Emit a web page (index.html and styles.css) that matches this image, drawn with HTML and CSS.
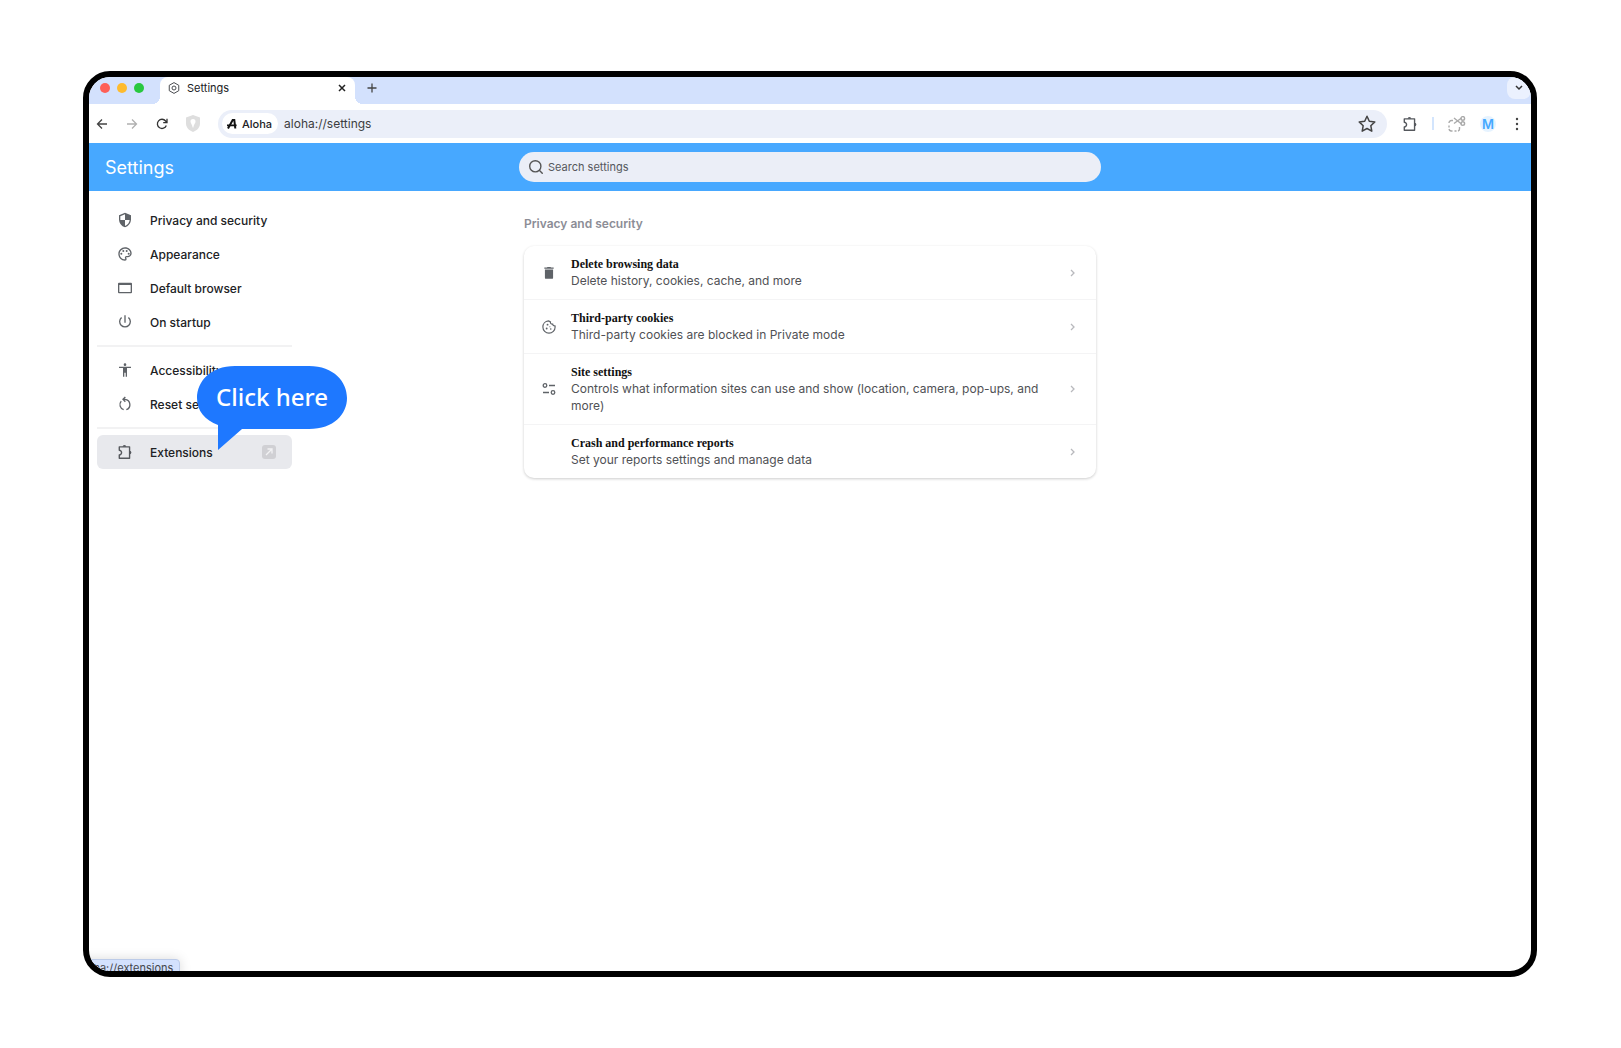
FILE: index.html
```
<!DOCTYPE html>
<html lang="en">
<head>
    <meta charset="UTF-8">
    <meta name="viewport" content="width=device-width, initial-scale=1.0">
    <title>Settings</title>
    <link rel="stylesheet" href="styles.css">
</head>
<body>
    <div class="browser">
        <div class="tab-bar">
            <div class="window-controls">
                <button class="dot dot-red" aria-label="Close window"></button>
                <button class="dot dot-yellow" aria-label="Minimize window"></button>
                <button class="dot dot-green" aria-label="Zoom window"></button>
            </div>
            <div class="tab">
                <svg class="tab-icon" width="12" height="12" viewBox="0 0 24 24" fill="none" stroke="#4a4c50" stroke-width="2"><path d="M12 1.200l9.500 5.400v10.800L12 22.800l-9.500-5.400V6.600z" stroke-linejoin="round"/><circle cx="12" cy="12" r="4"/></svg>
                <span class="tab-title">Settings</span>
                <button class="icon-button tab-close" aria-label="Close tab">
                    <svg width="8" height="8" viewBox="0 0 8 8" stroke="#222" stroke-width="1.5"><path d="M1 1l6 6M7 1L1 7"/></svg>
                </button>
            </div>
            <button class="icon-button new-tab" aria-label="New tab">
                <svg width="10" height="10" viewBox="0 0 10 10" stroke="#444" stroke-width="1.3"><path d="M5 .5v9M.5 5h9"/></svg>
            </button>
            <button class="icon-button tab-search" aria-label="Search tabs">
                <svg width="8" height="6" viewBox="0 0 8 6" fill="none" stroke="#333" stroke-width="1.5"><path d="M1 1l3 3 3-3"/></svg>
            </button>
        </div>

        <div class="toolbar">
            <div class="nav-buttons">
                <button class="icon-button" aria-label="Back">
                    <svg width="12" height="12" viewBox="0 0 12 12" fill="none" stroke="#444" stroke-width="1.3"><path d="M11 6H1.500M6 1.500L1.500 6 6 10.500"/></svg>
                </button>
                <button class="icon-button" aria-label="Forward" disabled>
                    <svg width="12" height="12" viewBox="0 0 12 12" fill="none" stroke="#b0b0b0" stroke-width="1.3"><path d="M1 6h9.500M6 1.500L10.500 6 6 10.500"/></svg>
                </button>
                <button class="icon-button" aria-label="Reload">
                    <svg width="12" height="12" viewBox="0 0 12 12" fill="none" stroke="#333" stroke-width="1.300"><path d="M10.300 7.500A4.600 4.600 0 1 1 9.600 3L11 4.500M11 .8v3.900H7.200"/></svg>
                </button>
                <button class="icon-button" aria-label="Shields">
                    <svg width="14" height="17" viewBox="0 0 14 17"><path d="M7 0l7 2.500v6c0 4-3 7-7 8.500-4-1.500-7-4.500-7-8.500v-6z" fill="#dedede"/><path d="M7 4a2.500 2.500 0 0 1 2.500 2.600C9.500 8.500 8 9 7.400 12.500h-.8C6.500 10 4.500 8.500 4.500 6.600A2.500 2.500 0 0 1 7 4z" fill="#fff"/></svg>
                </button>
            </div>
            <div class="address-bar">
                <span class="site-chip">
                    <svg width="10" height="10" viewBox="0 0 10 10" fill="none" stroke="#111" stroke-width="2"><path d="M1 9.500L5.700 1H7.300L8.300 9.500"/><path d="M0 6.400h9.600" stroke-width="1.600"/></svg>
                    Aloha
                </span>
                <input class="address-input" type="text" value="aloha://settings" aria-label="Address">
                <button class="icon-button" aria-label="Bookmark this page">
                    <svg width="18" height="18" viewBox="0 0 18 18" fill="none" stroke="#444" stroke-width="1.500" stroke-linejoin="round"><path d="M9 1.300l2.300 4.900 5.500.7-4 3.800 1 5.500L9 13.500l-4.800 2.700 1-5.500-4-3.800 5.500-.7z"/></svg>
                </button>
            </div>
            <div class="toolbar-actions">
                <button class="icon-button" aria-label="Extensions">
                    <svg width="16" height="16" viewBox="0 0 14 14"><use href="#puzzle"/></svg>
                </button>
                <span class="toolbar-divider"></span>
                <button class="icon-button" aria-label="Screenshot">
                    <svg width="18" height="16" viewBox="0 0 18 16" fill="none" stroke="#aaa" stroke-width="1.400"><path d="M5 4.500H3.500A2.500 2.500 0 0 0 1 7M1 9.500v2M1 13a2.500 2.500 0 0 0 2 2h1.500M6.500 15h2M10 15a2 2 0 0 0 1.500-2v-2M6 2l7.500 6M6 7.500L13.500 2"/><circle cx="14.800" cy="2.400" r="1.800"/><circle cx="14.800" cy="7.600" r="1.800"/></svg>
                </button>
                <button class="profile-button">M</button>
                <button class="icon-button menu-button" aria-label="Menu">
                    <svg width="4" height="14" viewBox="0 0 4 14" fill="#444"><circle cx="2" cy="2" r="1.200"/><circle cx="2" cy="7" r="1.200"/><circle cx="2" cy="12" r="1.200"/></svg>
                </button>
            </div>
        </div>

        <header class="header">
            <h1 class="header-title">Settings</h1>
            <label class="search">
                <svg width="14" height="14" viewBox="0 0 14 14" fill="none" stroke="#555" stroke-width="1.400"><circle cx="6.300" cy="6.300" r="5.600"/><path d="M10.300 10.300l3.400 3.400"/></svg>
                <input class="search-input" type="text" placeholder="Search settings" aria-label="Search settings">
            </label>
        </header>

        <div class="content">
            <nav class="sidebar">
                <a class="menu-item" href="#privacy">
                    <svg class="menu-icon" viewBox="0 0 24 24" fill="#5f6368"><path d="M12 1L3 5v6c0 5.550 3.840 10.740 9 12 5.160-1.260 9-6.450 9-12V5l-9-4zm0 10.990h7c-.53 4.120-3.280 7.790-7 8.940V12H5V6.300l7-3.110v8.800z"/></svg>
                    Privacy and security
                </a>
                <a class="menu-item" href="#appearance">
                    <svg class="menu-icon" viewBox="0 0 24 24" fill="#5f6368"><path d="M12 22C6.490 22 2 17.510 2 12S6.490 2 12 2s10 4.040 10 9c0 3.310-2.690 6-6 6h-1.770c-.28 0-.5.220-.5.500 0 .120.050.230.130.330.410.470.640 1.060.640 1.670A2.500 2.500 0 0 1 12 22zm0-18c-4.410 0-8 3.590-8 8s3.590 8 8 8c.28 0 .5-.22.5-.5a.540.540 0 0 0-.14-.35c-.41-.46-.63-1.050-.63-1.650a2.500 2.500 0 0 1 2.500-2.500H16c2.210 0 4-1.790 4-4 0-3.860-3.590-7-8-7z"/><circle cx="6.500" cy="11.500" r="1.500"/><circle cx="9.500" cy="7.500" r="1.500"/><circle cx="14.500" cy="7.500" r="1.500"/><circle cx="17.500" cy="11.500" r="1.500"/></svg>
                    Appearance
                </a>
                <a class="menu-item" href="#default-browser">
                    <svg class="menu-icon" viewBox="0 0 24 24" fill="#5f6368"><path d="M21 4H3a1.500 1.500 0 0 0-1.500 1.500v13A1.500 1.500 0 0 0 3 20h18a1.500 1.500 0 0 0 1.500-1.500v-13A1.500 1.500 0 0 0 21 4zm-.5 14h-17V7.500h17z"/></svg>
                    Default browser
                </a>
                <a class="menu-item" href="#startup">
                    <svg class="menu-icon" viewBox="0 0 24 24" fill="#5f6368"><path d="M13 2h-2v11h2V2zm4.830 2.500l-1.420 1.420A7 7 0 1 1 7.580 5.920L6.170 4.500A9 9 0 1 0 17.830 4.500z"/></svg>
                    On startup
                </a>
                <hr class="menu-divider">
                <a class="menu-item" href="#accessibility">
                    <svg class="menu-icon" viewBox="0 0 24 24" fill="#5f6368"><path d="M12 2a2 2 0 1 1 0 4 2 2 0 0 1 0-4zm9 7h-6v13h-2v-6h-2v6H9V9H3V7h18z"/></svg>
                    Accessibility
                </a>
                <a class="menu-item" href="#reset">
                    <svg class="menu-icon" viewBox="0 0 24 24" fill="none" stroke="#5f6368" stroke-width="2"><path d="M10 20.500A8 8 0 0 1 6.300 7.700M14 20.500A8 8 0 0 0 12 5H9M12.500 1.500L9 5l3.500 3.500"/></svg>
                    Reset settings
                </a>
                <hr class="menu-divider">
                <a class="menu-item active" href="#extensions">
                    <svg class="menu-icon" viewBox="0 0 14 14"><g id="puzzle" fill="none"><path d="M2 2.500h9v10H2V9.500a2 2 0 0 0 0-4z" stroke-width="1.200" stroke-linejoin="round" stroke="#55585d"/><path d="M4.900 2.500a1.600 1.600 0 0 1 3.200 0zM11 5.900a1.600 1.600 0 0 1 0 3.200z" fill="#55585d"/></g></svg>
                    Extensions
                    <svg class="external-icon" width="14" height="14" viewBox="0 0 14 14"><rect width="14" height="14" rx="3" fill="#d0d0d4"/><path d="M4 10l6-6M5.500 4H10v4.500" fill="none" stroke="#f2f2f4" stroke-width="1.300"/></svg>
                </a>

                <div class="callout">
                    <svg class="callout-shape" viewBox="0 0 150 84" fill="#1e78ff"><path d="M38 0H112C137 0 150 16 150 32S137 63 112 63H45L21 84V59C8 54 0 45 0 32 0 16 13 0 38 0z"/></svg>
                    <span class="callout-text">Click here</span>
                </div>
            </nav>

            <main class="main">
                <h2 class="section-title">Privacy and security</h2>
                <div class="card">
                    <a class="row" href="#delete-data">
                        <svg class="row-icon" viewBox="0 0 24 24" fill="#5f6368"><path d="M5 6h14v14a2 2 0 0 1-2 2H7a2 2 0 0 1-2-2zM4 2.500h4.500L9.500 1.500h5l1 1H20v2H4z"/></svg>
                        <div class="row-text">
                            <div class="row-title">Delete browsing data</div>
                            <div class="row-description">Delete history, cookies, cache, and more</div>
                        </div>
                        <svg class="chevron" viewBox="0 0 5 8"><path d="M1 1l3 3-3 3"/></svg>
                    </a>
                    <a class="row" href="#cookies">
                        <svg class="row-icon" viewBox="0 0 24 24" fill="none" stroke="#5f6368" stroke-width="2"><path d="M11 1.500C5.500 2 1.500 6.500 1.500 12a10.500 10.500 0 0 0 21 0c0-.8 0-1.200-.2-2-2 .4-3.800-.7-4-3-2.600.3-4.300-1.400-3.800-3.800-1.200-.2-1.800-1.700-3.500-1.700z"/><g fill="#5f6368" stroke="none"><circle cx="8" cy="14.500" r="1.600"/><circle cx="9.500" cy="8" r="1.600"/><circle cx="15" cy="15.500" r="1.400"/><circle cx="13.500" cy="11.500" r="1"/></g></svg>
                        <div class="row-text">
                            <div class="row-title">Third-party cookies</div>
                            <div class="row-description">Third-party cookies are blocked in Private mode</div>
                        </div>
                        <svg class="chevron" viewBox="0 0 5 8"><path d="M1 1l3 3-3 3"/></svg>
                    </a>
                    <a class="row" href="#site-settings">
                        <svg class="row-icon" viewBox="0 0 14 14" fill="none" stroke="#5f6368" stroke-width="1.300"><circle cx="3" cy="3.500" r="1.800"/><circle cx="11" cy="10.500" r="1.800"/><path d="M7 3.500h6M1 10.500h6"/></svg>
                        <div class="row-text">
                            <div class="row-title">Site settings</div>
                            <div class="row-description">Controls what information sites can use and show (location, camera, pop-ups, and more)</div>
                        </div>
                        <svg class="chevron" viewBox="0 0 5 8"><path d="M1 1l3 3-3 3"/></svg>
                    </a>
                    <a class="row" href="#reports">
                        <span class="row-icon"></span>
                        <div class="row-text">
                            <div class="row-title">Crash and performance reports</div>
                            <div class="row-description">Set your reports settings and manage data</div>
                        </div>
                        <svg class="chevron" viewBox="0 0 5 8"><path d="M1 1l3 3-3 3"/></svg>
                    </a>
                </div>
            </main>
        </div>

        <div class="status">aloha://extensions</div>
    </div>
</body>
</html>
```

FILE: styles.css
```
* {
    margin: 0;
    padding: 0;
    box-sizing: border-box;
}

body {
    background: #fff;
    padding: 71px 84px 71px 83px;
    font-family: 'Inter', sans-serif;
    font-size: 12px;
    color: #202124;
}

a {
    color: inherit;
    text-decoration: none;
}

button,
input {
    font: inherit;
    color: inherit;
    background: none;
    border: none;
    outline: none;
}

.browser {
    position: relative;
    min-height: calc(100vh - 142px);
    border: 6px solid #000;
    border-radius: 27px;
    overflow: hidden;
    background: #fff;
}

.icon-button {
    display: flex;
    align-items: center;
    justify-content: center;
}

/* Tab bar */
.tab-bar {
    display: flex;
    align-items: stretch;
    height: 27px;
    background: #d3e1fd;
}

.window-controls {
    display: flex;
    align-items: center;
    gap: 7px;
    width: 71px;
    padding: 0 0 6px 11px;
}

.dot {
    width: 10px;
    height: 10px;
    border-radius: 50%;
}

.dot-red {
    background: #fe5f57;
}

.dot-yellow {
    background: #febb2e;
}

.dot-green {
    background: #28c83f;
}

.tab {
    position: relative;
    display: flex;
    align-items: center;
    width: 195px;
    padding: 0 9px 6px 8px;
    border-radius: 8px 8px 0 0;
    background: #fff;
}

.tab::before,
.tab::after {
    content: '';
    position: absolute;
    bottom: 0;
    width: 8px;
    height: 8px;
}

.tab::before {
    left: -8px;
    background: radial-gradient(circle at 0 0, #d3e1fd 8px, #fff 8px);
}

.tab::after {
    right: -8px;
    background: radial-gradient(circle at 100% 0, #d3e1fd 8px, #fff 8px);
}

.tab-title {
    margin-left: 7px;
    font-size: 11px;
}

.tab-close {
    margin-left: auto;
}

.new-tab {
    width: 34px;
    padding-bottom: 6px;
}

.tab-search {
    width: 24px;
    height: 22px;
    margin-left: auto;
    border-radius: 8px;
    background: #ebf1fe;
}

/* Toolbar */
.toolbar {
    display: flex;
    align-items: center;
    height: 39px;
}

.nav-buttons {
    display: flex;
    align-items: center;
    gap: 18px;
    width: 129px;
    padding-left: 7px;
}

.address-bar {
    flex: 1;
    display: flex;
    align-items: center;
    height: 28px;
    padding: 0 11px 0 4px;
    border-radius: 14px;
    background: #ebeff9;
}

.site-chip {
    display: flex;
    align-items: center;
    gap: 5px;
    height: 21px;
    padding: 0 6px 0 5px;
    border-radius: 11px;
    background: #fff;
    font-size: 11px;
    font-weight: 500;
}

.address-input {
    flex: 1;
    margin-left: 6px;
    color: #3c3d40;
}

.toolbar-actions {
    display: flex;
    align-items: center;
    gap: 14px;
    padding: 0 12px 0 15px;
}

.toolbar-divider {
    width: 2px;
    height: 13px;
    background: #d3e5fd;
}

.profile-button {
    width: 16px;
    height: 16px;
    border-radius: 50%;
    background: #e6f3ff;
    color: #44a8ff;
    font-size: 13px;
    font-weight: 600;
    line-height: 16px;
}

.menu-button {
    margin-left: 5px;
}

/* Header */
.header {
    display: grid;
    grid-template-columns: 1fr 582px 1fr;
    align-items: center;
    height: 48px;
    background: #47a8ff;
}

.header-title {
    padding-left: 16px;
    color: #fff;
    font-size: 18px;
    font-weight: 400;
}

.search {
    display: flex;
    align-items: center;
    gap: 5px;
    height: 30px;
    padding: 0 10px;
    border-radius: 15px;
    background: #ebeef7;
}

.search-input {
    flex: 1;
    font-size: 11px;
}

.search-input::placeholder {
    color: #55575c;
    opacity: 1;
}

/* Content */
.content {
    display: grid;
    grid-template-columns: 1fr 572px 1fr;
}

.sidebar {
    position: relative;
    width: 205px;
    padding: 12px 2px 0 8px;
}

.menu-item {
    display: flex;
    align-items: center;
    gap: 17px;
    height: 34px;
    padding: 0 16px 0 20px;
    border-radius: 6px;
    font-weight: 500;
}

.menu-item.active {
    background: #e8e9ed;
}

.menu-icon {
    flex: none;
    width: 16px;
    height: 16px;
}

.external-icon {
    margin-left: auto;
}

.menu-divider {
    height: 2px;
    margin: 6px 0;
    border: none;
    background: #f2f2f3;
}

.callout {
    position: absolute;
    top: 175px;
    left: 108px;
    width: 150px;
    height: 84px;
}

.callout-shape {
    position: absolute;
    inset: 0;
}

.callout-text {
    position: relative;
    display: block;
    color: #fff;
    font-family: 'Noto Sans', sans-serif;
    font-size: 24px;
    font-weight: 500;
    line-height: 62px;
    text-align: center;
}

.section-title {
    padding: 24px 0 14px;
    color: #8c8d96;
    font-size: 12px;
    font-weight: 600;
    line-height: 17px;
}

.card {
    border-radius: 10px;
    background: #fff;
    box-shadow: 0 1px 3px rgba(0, 0, 0, 0.2);
}

.row {
    display: flex;
    align-items: center;
    padding: 10px 21px 10px 18px;
    border-bottom: 1px solid #f4f4f5;
    line-height: 17px;
}

.row:last-child {
    border-bottom: none;
}

.row-icon {
    flex: none;
    width: 14px;
    height: 14px;
    margin-right: 15px;
}

.row-text {
    flex: 1;
    padding-right: 30px;
}

.row-title {
    font-family: 'Liberation Serif', serif;
    font-weight: bold;
    line-height: 16px;
    color: #111;
}

.row-description {
    color: #505155;
}

.chevron {
    flex: none;
    width: 5px;
    height: 8px;
    fill: none;
    stroke: #b8b9bd;
    stroke-width: 1.3;
}

/* Link preview in the window corner */
.status {
    position: absolute;
    left: -18px;
    bottom: -7px;
    padding: 0 6px;
    border: 1px solid #bccbe8;
    border-radius: 4px;
    background: #d3e1fd;
    box-shadow: 0 0 12px rgba(0, 0, 0, 0.15);
    color: #45474c;
    font-size: 11px;
    line-height: 17px;
}
```
